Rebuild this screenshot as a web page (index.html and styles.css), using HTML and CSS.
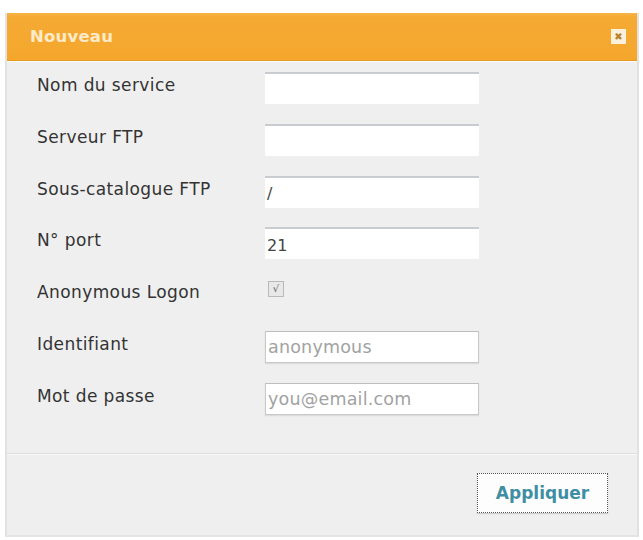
FILE: index.html
```html
<!DOCTYPE html>
<html lang="fr">
<head>
<meta charset="utf-8">
<title>Nouveau</title>
<link rel="stylesheet" href="styles.css">
</head>
<body>
<div class="dialog">
  <div class="header">
    <span class="title">Nouveau</span>
    <span class="close">&#x2716;</span>
  </div>
  <div class="form">
    <label class="lbl">Nom du service</label>
    <input class="field" type="text">
    <label class="lbl">Serveur FTP</label>
    <input class="field" type="text">
    <label class="lbl">Sous-catalogue FTP</label>
    <input class="field" type="text" value="/">
    <label class="lbl">N° port</label>
    <input class="field" type="text" value="21">
    <label class="lbl">Anonymous Logon</label>
    <div class="chkcell"><span class="chk">&#x221A;</span></div>
    <label class="lbl">Identifiant</label>
    <input class="field boxed" type="text" placeholder="anonymous">
    <label class="lbl">Mot de passe</label>
    <input class="field boxed" type="text" placeholder="you@email.com">
  </div>
  <div class="footer">
    <button class="apply">Appliquer</button>
  </div>
</div>
</body>
</html>
```
FILE: styles.css
```css
html, body {
  margin: 0;
  padding: 0;
  background: #ffffff;
}
body {
  font-family: "DejaVu Sans", Verdana, sans-serif;
  color: #333333;
}
.dialog {
  margin: 13px 4px 0 5px;
  height: 524px;
  background: #efefef;
  border-left: 2px solid #e2e2e2;
  border-right: 2px solid #e2e2e2;
  border-bottom: 2px solid #e4e4e4;
  box-sizing: border-box;
  display: flex;
  flex-direction: column;
}
.header {
  height: 48px;
  background: linear-gradient(#f6b44a 0, #f5aa34 4px, #f5a72c 100%);
  border-bottom: 1px solid #e59a22;
  box-shadow: 0 1px 0 #f7fbff;
  display: flex;
  align-items: center;
  justify-content: space-between;
  padding: 0 11px 0 23px;
  box-sizing: border-box;
}
.title {
  color: #fdebc8;
  font-weight: bold;
  font-size: 16.5px;
  letter-spacing: 0.2px;
}
.close {
  width: 15px;
  height: 15px;
  background: #fbf0dc;
  color: #b8802a;
  font-size: 10px;
  font-weight: bold;
  line-height: 15px;
  text-align: center;
  margin-bottom: 1px;
}
.form {
  display: grid;
  grid-template-columns: 228px 214px;
  grid-auto-rows: 32px;
  row-gap: 19.8px;
  align-items: center;
  padding: 11px 0 38px 30px;
  border-bottom: 1px solid #dedede;
  box-shadow: 0 1px 0 #f8f8f8;
}
.lbl {
  font-size: 17px;
  color: #333333;
  letter-spacing: 0.4px;
  margin-top: -6px;
  white-space: nowrap;
}
.field {
  box-sizing: border-box;
  width: 214px;
  height: 32px;
  margin: 0;
  border: none;
  border-top: 2px solid #c8cbcf;
  background: #ffffff;
  font-family: "DejaVu Sans", Verdana, sans-serif;
  font-size: 16px;
  color: #444444;
  padding: 2px 2px 0 2px;
  outline: none;
}
.field.boxed {
  border: 1px solid #c9c9c9;
  border-top-color: #bdbdbd;
  box-shadow: 0 1px 1px #dcdcdc;
}
.field::placeholder {
  color: #a2a2a2;
  font-size: 17.5px;
  letter-spacing: 0.2px;
}
.chkcell {
  align-self: start;
  padding-top: 2px;
  padding-left: 3px;
}
.chk {
  display: block;
  width: 14px;
  height: 14px;
  border: 1px solid #b9b9b9;
  background: #e8e8e8;
  color: #666666;
  font-size: 10px;
  line-height: 14px;
  text-align: center;
}
.footer {
  flex: 1;
  display: flex;
  justify-content: flex-end;
  align-items: flex-start;
  padding: 19px 29px 0 0;
}
.apply {
  width: 131px;
  height: 40px;
  background: #fdfdfd;
  border: 1px dotted #555555;
  box-shadow: 0 1px 1px #cccccc;
  color: #3f8ea3;
  font-family: "DejaVu Sans", Verdana, sans-serif;
  font-weight: bold;
  font-size: 17px;
  letter-spacing: 0;
  padding: 0;
}
```
